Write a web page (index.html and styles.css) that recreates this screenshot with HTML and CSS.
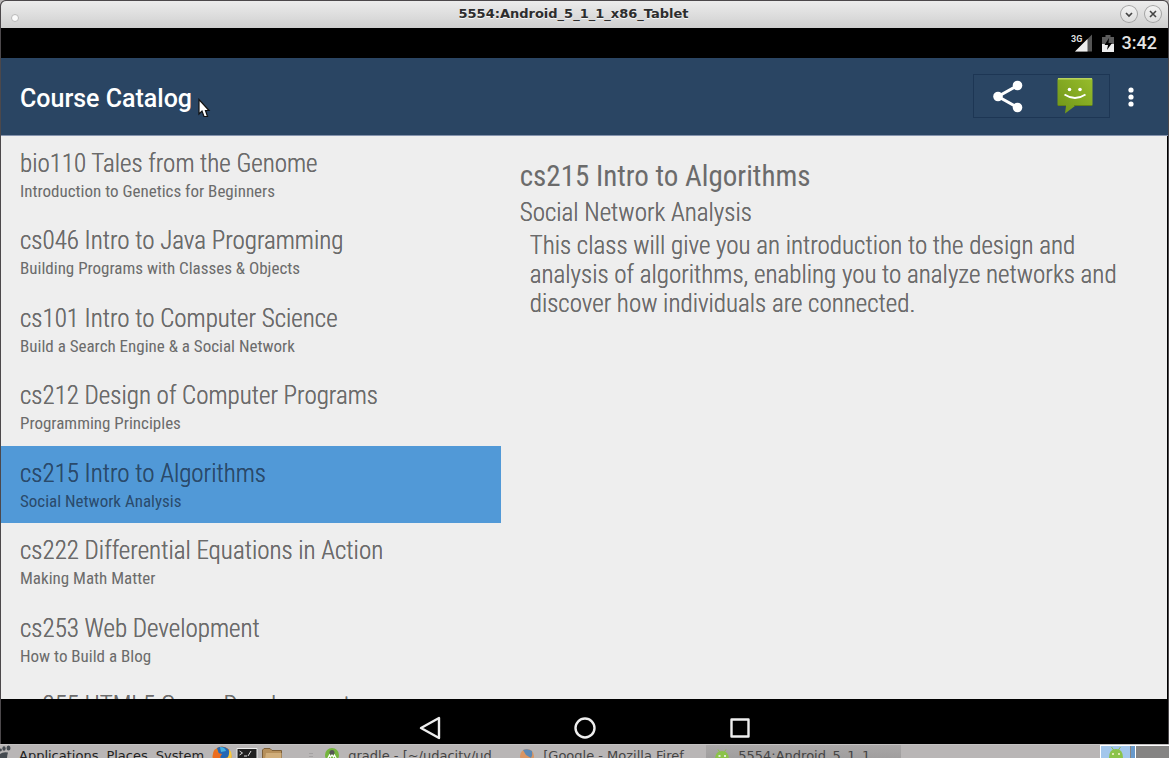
FILE: index.html
```html
<!DOCTYPE html>
<html lang="en">
<head>
<meta charset="utf-8">
<title>Course Catalog</title>
<link rel="stylesheet" href="styles.css">
</head>
<body>
<div class="window">
  <header class="titlebar">
    <span class="titlebar-side"><button class="dot" aria-label="Window menu"></button></span>
    <span class="titlebar-text">5554:Android_5_1_1_x86_Tablet</span>
    <span class="titlebar-side titlebar-controls">
      <button class="win-btn" aria-label="Minimize"><svg width="18" height="18" viewBox="0 0 18 18"><path d="M6 8l3 3 3-3" fill="none" stroke="#444" stroke-width="1.7"/></svg></button>
      <button class="win-btn" aria-label="Close"><svg width="18" height="18" viewBox="0 0 18 18"><path d="M6 6l6 6M12 6l-6 6" fill="none" stroke="#444" stroke-width="1.6"/></svg></button>
    </span>
  </header>
  <div class="statusbar">
    <svg width="22" height="18" viewBox="0 0 22 18"><path d="M4 17.500L21 0.500V17.500z" fill="#555"/><path d="M4 17.500L16.500 5V17.500z" fill="#eee"/><text class="net" x="0" y="8">3G</text></svg>
    <svg class="battery" width="12" height="18" viewBox="0 0 12 18"><path d="M0 3h3.500V1h5v2H12v7H0z" fill="#5c5c5c"/><path d="M0 10h12v8H0z" fill="#eee"/><path d="M7 4L2.500 11H6l-1 5 5-7H6.500z" fill="#000"/></svg>
    <span class="clock">3:42</span>
  </div>
  <div class="appbar">
    <h1 class="app-title">Course Catalog</h1>
    <div class="actions">
      <div class="share-group">
        <button class="action share" aria-label="Share"><svg width="30" height="33" viewBox="0 0 30 33"><path d="M24.500 5.500L5 16.500l19.500 11" fill="none" stroke="#fff" stroke-width="3"/><circle cx="24.500" cy="5.500" r="4.800" fill="#fff"/><circle cx="5" cy="16.500" r="4.800" fill="#fff"/><circle cx="24.500" cy="27.500" r="4.800" fill="#fff"/></svg></button>
        <button class="action" aria-label="Messaging"><svg width="36" height="37" viewBox="0 0 36 37"><defs><linearGradient id="msg" x1="0" y1="1" x2="1" y2="0"><stop offset="0" stop-color="#6f9418"/><stop offset="1" stop-color="#97bd2b"/></linearGradient></defs><path d="M2 1h32q1.500 0 1.500 1.500v25q0 1.500-1.500 1.500H18L8 36.500 9 29H2Q0.500 29 0.500 27.500v-25Q0.500 1 2 1z" fill="url(#msg)"/><path d="M1 1.700h34" stroke="#b9d35c" stroke-width="1.400"/><path d="M1 28.500h8M17 28.500h18" stroke="#648414"/><circle cx="12.500" cy="12.500" r="1.800" fill="#fff"/><circle cx="23" cy="12.500" r="1.800" fill="#fff"/><path d="M7.500 17.500q10.500 7 21 0" fill="none" stroke="#fff" stroke-width="1.800"/></svg></button>
      </div>
      <button class="overflow" aria-label="More options"><svg width="6" height="20" viewBox="0 0 6 20"><g fill="#fff"><circle cx="3" cy="3" r="2.600"/><circle cx="3" cy="10" r="2.600"/><circle cx="3" cy="17" r="2.600"/></g></svg></button>
    </div>
    <svg class="cursor" width="14" height="20" viewBox="0 0 14 20"><path d="M2 1.500v14.500l3-3 2 5.500h3.500L8.500 12.500H12z" fill="#fff" stroke="#111" stroke-width="1.200"/></svg>
  </div>
  <main class="content">
    <ul class="courses">
      <li class="course"><span class="course-name">bio110 Tales from the Genome</span><span class="course-sub">Introduction to Genetics for Beginners</span></li>
      <li class="course"><span class="course-name">cs046 Intro to Java Programming</span><span class="course-sub">Building Programs with Classes &amp; Objects</span></li>
      <li class="course"><span class="course-name">cs101 Intro to Computer Science</span><span class="course-sub">Build a Search Engine &amp; a Social Network</span></li>
      <li class="course"><span class="course-name">cs212 Design of Computer Programs</span><span class="course-sub">Programming Principles</span></li>
      <li class="course selected"><span class="course-name">cs215 Intro to Algorithms</span><span class="course-sub">Social Network Analysis</span></li>
      <li class="course"><span class="course-name">cs222 Differential Equations in Action</span><span class="course-sub">Making Math Matter</span></li>
      <li class="course"><span class="course-name">cs253 Web Development</span><span class="course-sub">How to Build a Blog</span></li>
      <li class="course"><span class="course-name">cs255 HTML5 Game Development</span></li>
    </ul>
    <article class="detail">
      <h2 class="detail-title">cs215 Intro to Algorithms</h2>
      <h3 class="detail-sub">Social Network Analysis</h3>
      <p class="detail-text">This class will give you an introduction to the design and analysis of algorithms, enabling you to analyze networks and discover how individuals are connected.</p>
    </article>
  </main>
  <nav class="navbar">
    <button class="nav-btn" aria-label="Back"><svg width="24" height="24" viewBox="0 0 24 24"><path d="M21 2v20L3 12z"/></svg></button>
    <button class="nav-btn" aria-label="Home"><svg width="24" height="24" viewBox="0 0 24 24"><circle cx="12" cy="12" r="9.500"/></svg></button>
    <button class="nav-btn" aria-label="Recents"><svg width="24" height="24" viewBox="0 0 24 24"><rect x="3.500" y="3.500" width="17" height="17"/></svg></button>
  </nav>
</div>
<footer class="taskbar">
  <svg class="foot" width="11" height="14" viewBox="0 0 11 14"><g fill="#444a50"><ellipse cx="8.500" cy="3" rx="2" ry="2.500"/><ellipse cx="4" cy="3.500" rx="1.700" ry="2.200"/><circle cx="0.500" cy="5" r="1.400"/><path d="M0 9q3-2.500 8-1.500-1 3-1 6.500H0z"/></g></svg>
  <div class="menus"><button class="menu">Applications</button><button class="menu">Places</button><button class="menu">System</button></div>
  <div class="launchers">
    <svg width="20" height="14" viewBox="0 0 20 14"><circle cx="10" cy="11" r="9.500" fill="#e8791b"/><path d="M5 3a10 10 0 0 1 11 1q3 4 1 8l-8 2-2-5z" fill="#2468b5"/><path d="M8 2q5 0 6 4l-5 1z" fill="#46b0e0"/><path d="M17 4q4 4 2 10h-4q3-5 2-10z" fill="#f7ca3e"/><path d="M2 5l4 3 4 1-3 5H1z" fill="#ec6c20"/></svg>
    <svg width="22" height="14" viewBox="0 0 22 14"><path d="M1 3.500h20V14H1z" fill="#222" stroke="#eee"/><path d="M3.500 6l3 2-3 2M8 11h3M12 11l3-5" fill="none" stroke="#ddd"/></svg>
    <svg width="20" height="14" viewBox="0 0 20 14"><path d="M.5 14V5l1.500-1.500h6L10 5.500h9.500V14z" fill="#b6905b" stroke="#7d5f38"/><path d="M3 14l1-6h15.500v6z" fill="#d0ae7b"/></svg>
  </div>
  <svg class="grip" width="4" height="14" viewBox="0 0 4 14"><path d="M0 8.500h4M0 11.500h4" stroke="#a3a1a1"/></svg>
  <div class="tasks">
    <button class="task"><svg width="14" height="14" viewBox="0 0 14 14"><circle cx="7" cy="10" r="7" fill="#74b53c"/><circle cx="7" cy="7.500" r="2.500" fill="#555"/><path d="M2.500 14l2-4 1 2 1.500-2 1.500 2 1-2 2 4" fill="none" stroke="#fff" stroke-width="1.200"/></svg><span class="task-label">gradle - [~/udacity/ud</span></button>
    <button class="task"><svg width="14" height="14" viewBox="0 0 14 14"><circle cx="7" cy="11" r="7" fill="#d99664"/><path d="M3 5q5-2 9 1 1 4-1 7l-5-3z" fill="#5b88b4"/></svg><span class="task-label">[Google - Mozilla Firef</span></button>
    <button class="task active"><svg width="14" height="14" viewBox="0 0 14 14"><path d="M0 15q0-9 7-9t7 9z" fill="#8bc34a"/><path d="M3 4.500l2 3M11 4.500L9 7.500" stroke="#8bc34a"/><path d="M3.500 10h2v2h-2zM9 10h2v2H9z" fill="#dfe8d5"/></svg><span class="task-label">5554:Android_5_1_1_</span></button>
  </div>
  <div class="pager"><span class="desk"><svg width="14" height="12" viewBox="0 0 14 12"><path d="M0 12q0-9 7-9t7 9z" fill="#8bc34a"/><path d="M2.500 1L5 4.500M11.500 1L9 4.500" stroke="#8bc34a"/><path d="M3 7h2v2H3zM9 7h2v2H9z" fill="#dfe8b0"/></svg></span><span class="desk-edge"></span></div>
</footer>
</body>
</html>
```
FILE: styles.css
```css
* { box-sizing: border-box; }
body { margin: 0; height: 100vh; display: flex; flex-direction: column; overflow: hidden; background: #b9b6b6; font-family: Roboto, "Noto Sans", sans-serif; }
button { border: 0; padding: 0; margin: 0; background: none; color: inherit; font: inherit; }
svg { display: block; }
.window { flex: 1; min-height: 0; display: flex; flex-direction: column; border: 1px solid #4c484b; border-bottom: 0; border-radius: 6px 6px 0 0; overflow: hidden; background: #000; }

.titlebar { flex: none; height: 27px; display: flex; align-items: center; padding: 0 6px 2px 10px; background: linear-gradient(#ececec, #cfcfcf); }
.titlebar-side { flex: 1; display: flex; }
.titlebar-controls { justify-content: flex-end; gap: 6px; }
.titlebar-text { padding-right: 26px; font: bold 13px/18px "DejaVu Sans", sans-serif; color: #2d2d2d; text-shadow: 0 1px 0 #f8f8f8; }
.dot { width: 8px; height: 8px; margin-top: 8px; border-radius: 50%; border: 1px solid #b9b9b9; background: #fafafa; }
.win-btn { width: 18px; height: 18px; border-radius: 50%; background: linear-gradient(#f4f4f4, #dcdcdc); box-shadow: 0 0 0 1px #a3a3a3 inset; }

.statusbar { flex: none; height: 30px; display: flex; align-items: center; justify-content: flex-end; padding-right: 11px; background: #000; color: #e4e4e4; }
.net { font: 700 9px Roboto, sans-serif; fill: #ddd; }
.battery { margin-left: 9px; }
.clock { margin-left: 8px; font: 500 18px/30px Roboto, sans-serif; }

.appbar { flex: none; position: relative; height: 78px; display: flex; align-items: center; justify-content: space-between; padding: 0 34px 2px 19px; background: #2a4563; border-bottom: 1px solid #8593ad; color: #fff; }
.app-title { margin: 6px 0 0; font: 500 25px/32px Roboto, sans-serif; }
.actions { display: flex; align-items: center; gap: 18px; }
.share-group { display: flex; width: 137px; height: 44px; border: 1px solid #1d3654; }
.action { flex: 1; display: flex; align-items: center; justify-content: center; }
.share { padding-top: 2px; }
.overflow { width: 6px; padding-top: 2px; }
.cursor { position: absolute; left: 196px; top: 40px; }

.content { flex: 1; min-height: 0; display: grid; grid-template-columns: 3fr 4fr; overflow: hidden; margin-right: 1px; background: #eee; color: #6b6b6b; font-family: "Roboto Condensed", Roboto, sans-serif; }
.courses { margin: 0; padding: 0; list-style: none; }
.course { height: 77px; padding: 11px 19px 0; display: flex; flex-direction: column; }
.course:nth-child(even) { height: 78px; }
.course-name, .detail-sub, .detail-text { font-weight: 300; text-shadow: 0 0 0 currentColor; }
.course-name { font-size: 25px; line-height: 34px; }
.course-sub { font-size: 17px; line-height: 20px; }
.selected { background: #5199d7; color: #2a4a6b; }
.detail { padding: 20px 19px; }
.detail-title { margin: 0; font-size: 29px; font-weight: 400; line-height: 40px; }
.detail-sub { margin: 0; font-size: 25px; line-height: 33px; }
.detail-text { margin: 2px 0 0 10px; font-size: 25px; line-height: 29px; }

.navbar { flex: none; height: 45px; display: flex; justify-content: center; gap: 131px; padding-top: 17px; background: #000; }
.nav-btn { width: 24px; height: 24px; }
.nav-btn svg { fill: none; stroke: #eee; stroke-width: 2.4; stroke-linejoin: round; }

.taskbar { flex: none; height: 14px; display: flex; overflow: hidden; background: #b9b6b6; border-top: 1px solid #c4c2c2; font: 13px/22px "DejaVu Sans", sans-serif; color: #222; }
.menus { display: flex; gap: 8px; margin-left: 8px; align-items: flex-start; }
.launchers { display: flex; gap: 4px; margin-left: 8px; }
.grip { margin-left: 27px; }
.tasks { display: flex; flex: 1; margin-left: 3px; }
.task { width: 195px; height: 22px; display: flex; gap: 9px; padding-left: 9px; text-align: left; white-space: nowrap; overflow: hidden; color: #444; }
.active { background: linear-gradient(#aaa8a8, #999797); }
.pager { flex: none; width: 69px; display: flex; gap: 1px; border-top: 1px solid #fff; border-left: 1px solid #fff; background: #858483; }
.desk { width: 29px; display: flex; justify-content: center; background: #a3c7ec; }
.desk-edge { width: 5px; background: #6799cb; border-right: 1px solid #fff; }
```
